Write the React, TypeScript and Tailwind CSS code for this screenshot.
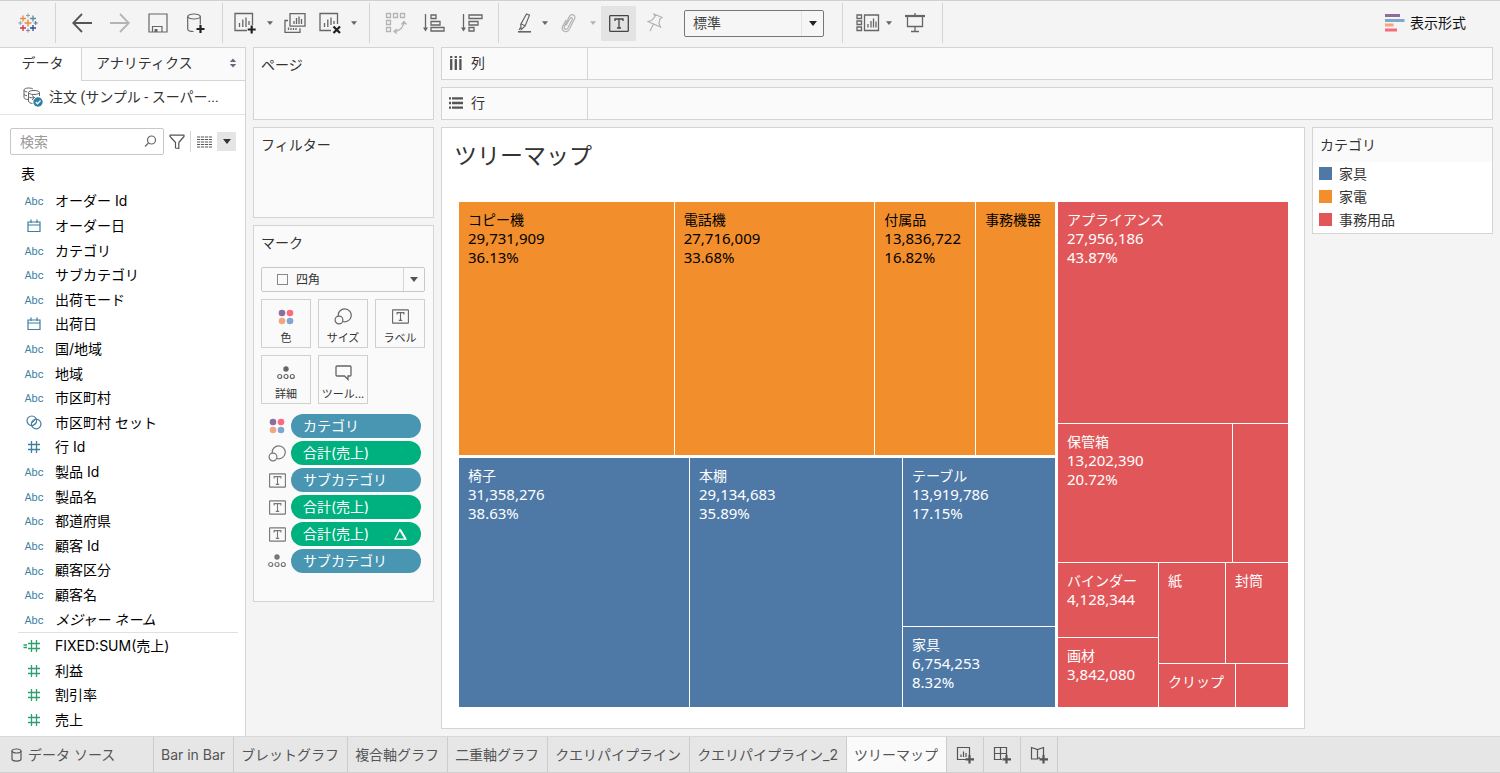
import type { ReactNode } from "react";
import clsx from "clsx";

type TFieldType = "text" | "date" | "set" | "number" | "calc";

type TField = {
  name: string;
  type: TFieldType;
  italic?: boolean;
};

const dimensions: TField[] = [
  { name: "オーダー Id", type: "text" },
  { name: "オーダー日", type: "date" },
  { name: "カテゴリ", type: "text" },
  { name: "サブカテゴリ", type: "text" },
  { name: "出荷モード", type: "text" },
  { name: "出荷日", type: "date" },
  { name: "国/地域", type: "text" },
  { name: "地域", type: "text" },
  { name: "市区町村", type: "text" },
  { name: "市区町村 セット", type: "set" },
  { name: "行 Id", type: "number" },
  { name: "製品 Id", type: "text" },
  { name: "製品名", type: "text" },
  { name: "都道府県", type: "text" },
  { name: "顧客 Id", type: "text" },
  { name: "顧客区分", type: "text" },
  { name: "顧客名", type: "text" },
  { name: "メジャー ネーム", type: "text", italic: true },
];

const measures: TField[] = [
  { name: "FIXED:SUM(売上)", type: "calc" },
  { name: "利益", type: "number" },
  { name: "割引率", type: "number" },
  { name: "売上", type: "number" },
];

const sheets = [
  "Bar in Bar",
  "ブレットグラフ",
  "複合軸グラフ",
  "二重軸グラフ",
  "クエリパイプライン",
  "クエリパイプライン_2",
  "ツリーマップ",
];

const legend = [
  { name: "家具", color: "bg-[#4e79a7]" },
  { name: "家電", color: "bg-[#f28e2b]" },
  { name: "事務用品", color: "bg-[#e15759]" },
];

const App = () => {
  return (
    <div className="flex min-h-screen flex-col border-y border-[#d0d0d0] bg-[#f4f4f4] font-[Inter,'Noto_Sans_CJK_JP',sans-serif] text-sm text-[#333]">
      <Toolbar />
      <main className="flex flex-1">
        <DataPane />
        <div className="flex flex-1 gap-[7px] px-[7px] pb-[7px]">
          <Cards />
          <div className="flex min-w-0 flex-1 flex-col gap-[7px]">
            <Shelf icon={<ColumnsIcon />} label="列" />
            <Shelf icon={<RowsIcon />} label="行" />
            <div className="flex flex-1 items-start gap-[7px]">
              <Worksheet />
              <Legend />
            </div>
          </div>
        </div>
      </main>
      <SheetTabs />
    </div>
  );
};

export default App;

/* ---------- toolbar ---------- */

type TToolButton = {
  label: string;
  children: ReactNode;
  className?: string;
};
const ToolButton = ({ label, children, className }: TToolButton) => (
  <button
    type="button"
    aria-label={label}
    className={clsx("flex h-[35px] shrink-0 items-center justify-center", className)}
  >
    {children}
  </button>
);

const ToolGroup = ({ children, className }: { children: ReactNode; className?: string }) => (
  <div
    className={clsx(
      "flex h-10 shrink-0 items-center border-r border-[#d4d4d4] text-[#666]",
      className
    )}
  >
    {children}
  </div>
);

const Toolbar = () => (
  <header className="flex h-[46px] items-center pb-0.5">
    <ToolGroup className="w-14 justify-center">
      <LogoIcon />
    </ToolGroup>
    <ToolGroup className="px-[7px]">
      <ToolButton label="元に戻す" className="w-[38px]">
        <svg width="20" height="20" viewBox="0 0 20 20" fill="none" stroke="#555" strokeWidth="1.8">
          <path d="M10 1L1.2 10l8.8 9M1.2 10H20" />
        </svg>
      </ToolButton>
      <ToolButton label="やり直し" className="w-[38px]">
        <svg width="20" height="20" viewBox="0 0 20 20" fill="none" stroke="#b4b4b4" strokeWidth="1.8">
          <path d="M10 1l8.8 9-8.8 9M18.8 10H0" />
        </svg>
      </ToolButton>
      <ToolButton label="保存" className="w-[38px]">
        <svg width="20" height="20" viewBox="0 0 20 20" fill="none" stroke="currentColor" strokeWidth="1.2">
          <path d="M1 1h18v18H1zM4.500 19v-5.500h9.500V19" />
          <path d="M6.500 16h3v3h-3z" fill="currentColor" stroke="none" />
        </svg>
      </ToolButton>
      <ToolButton label="新しいデータ ソース" className="w-[38px]">
        <svg width="20" height="22" viewBox="0 0 20 22" fill="none" stroke="currentColor" strokeWidth="1.2">
          <ellipse cx="8" cy="4.500" rx="6.300" ry="2.500" />
          <path d="M1.700 4.500v12.500c0 1.500 2.500 2.500 5.800 2.500M14.300 4.500v8" />
          <path d="M14.500 13v8M10.500 17h8" stroke="#222" strokeWidth="2.200" />
        </svg>
      </ToolButton>
    </ToolGroup>
    <ToolGroup className="pr-2 pl-1">
      <ToolButton label="新しいワークシート" className="w-9">
        <svg width="22" height="22" viewBox="0 0 22 22" fill="none" stroke="currentColor" strokeWidth="1.3">
          <path d="M13 18.500H1V1.500h17.500V13M5.500 15v-4M8.800 15V7.500M12 15V5.500M15 13V9" />
          <path d="M17.700 13.500v8M13.700 17.500h8" stroke="#222" strokeWidth="2.200" />
        </svg>
      </ToolButton>
      <ToolButton label="新しいワークシートのメニュー" className="w-3.5">
        <Caret />
      </ToolButton>
      <ToolButton label="複製" className="w-9">
        <svg width="22" height="20" viewBox="0 0 22 20" fill="none" stroke="currentColor" strokeWidth="1.3">
          <path d="M6 .7h15v12.500H6zM10 11V8M12.500 11V5M15 11V3.500M17.500 11V6" />
          <path d="M4 7.500H1v11.800h15v-4M4.500 17v-2.500M7 17v-2M9.500 17v-2M12 17v-2" />
        </svg>
      </ToolButton>
      <ToolButton label="クリア" className="w-[34px]">
        <svg width="22" height="22" viewBox="0 0 22 22" fill="none" stroke="currentColor" strokeWidth="1.3">
          <path d="M12 18.500H1V1.500h17.500V12M5.500 15v-4M8.800 15V7.500M12 13V5.500M15 12V9" />
          <path d="M14.500 14.500l6.500 6.500M21 14.500L14.500 21" stroke="#222" strokeWidth="2.200" />
        </svg>
      </ToolButton>
      <ToolButton label="クリアのメニュー" className="w-3.5">
        <Caret />
      </ToolButton>
    </ToolGroup>
    <ToolGroup className="px-[7px]">
      <ToolButton label="行と列の交換" className="w-[38px] text-[#b4b4b4]">
        <svg width="22" height="22" viewBox="0 0 22 22" fill="none" stroke="currentColor" strokeWidth="1.3">
          <path d="M1.500 1.500h4v4h-4zM8.500 1.500h4v4h-4zM15.500 1.500h4v4h-4zM1.500 8.500h4v4h-4zM1.500 15.500h4v4h-4z" />
          <path d="M19 9.500c0 5-4 9.500-9.500 10M16.500 12.500L19 9.500l2.500 3M12 17l-3 2.500 3 2" />
        </svg>
      </ToolButton>
      <ToolButton label="昇順で並べ替え" className="w-[38px]">
        <svg width="22" height="20" viewBox="0 0 22 20" fill="none" stroke="currentColor" strokeWidth="1.300">
          <path d="M2.500 1v16M8 2h5v3.500H8zM8 8.500h9V12H8zM8 14.500h13V18H8z" />
          <path d="M0 14.500h5L2.500 18.500z" fill="currentColor" stroke="none" />
        </svg>
      </ToolButton>
      <ToolButton label="降順で並べ替え" className="w-[38px]">
        <svg width="22" height="20" viewBox="0 0 22 20" fill="none" stroke="currentColor" strokeWidth="1.300">
          <path d="M2.500 1v16M8 2h13v3.500H8zM8 8.500h9V12H8zM8 14.500h5V18H8z" />
          <path d="M0 14.500h5L2.500 18.500z" fill="currentColor" stroke="none" />
        </svg>
      </ToolButton>
    </ToolGroup>
    <ToolGroup className="pr-[18px] pl-3">
      <ToolButton label="ハイライト" className="w-7">
        <svg width="16" height="20" viewBox="0 0 16 20" fill="none" stroke="currentColor" strokeWidth="1.200">
          <path d="M9.500 1l3 1.200-4.500 11-3.800 3.300-.5-5zM4.300 11l3.800 1.700M3.500 14.500l-1.500 2.500" />
          <path d="M1 18.800h13" strokeWidth="1.600" />
        </svg>
      </ToolButton>
      <ToolButton label="ハイライトのメニュー" className="w-3">
        <Caret />
      </ToolButton>
      <ToolButton label="グループ" className="w-9 text-[#b4b4b4]">
        <svg width="16" height="20" viewBox="0 0 16 20" fill="none" stroke="currentColor" strokeWidth="1.200">
          <path d="M5 12.500L9 5.500c1-1.600 3-.6 2.200 1.200L6.800 15c-1.400 2.500-4.600 1-3.400-1.700L8.300 3.500c2-3.500 7-1.500 5.300 2.300L8.200 16.500c-2.500 4.300-8.700 1.500-6.500-3.200L5 7" />
        </svg>
      </ToolButton>
      <ToolButton label="グループのメニュー" className="w-3 text-[#b4b4b4]">
        <Caret />
      </ToolButton>
      <ToolButton label="マーク ラベルを表示" className="ml-0.5 w-[35px] bg-[#e3e3e3] text-[#444]">
        <LabelIcon width={20} height={17} />
      </ToolButton>
      <ToolButton label="軸を固定" className="w-[38px] text-[#b4b4b4]">
        <svg width="16" height="20" viewBox="0 0 16 20" fill="none" stroke="currentColor" strokeWidth="1.200">
          <path d="M7 1l8 3.500-2.200 1.700-.8 4.300 1.500 3.500L1 8.500l3.800-1.300L8 3.700zM6.500 11L3 18" />
        </svg>
      </ToolButton>
      <div className="relative ml-[10px] flex h-[27px] w-[140px] items-center rounded-[2px] border border-[#777] bg-[#f6f6f6]">
        <select
          aria-label="表示サイズ"
          className="h-full w-full appearance-none bg-transparent pl-2 text-sm text-[#444] outline-none"
        >
          <option>標準</option>
        </select>
        <span className="pointer-events-none absolute inset-y-0 right-0 flex w-[22px] items-center justify-center border-l border-[#e4e4e4] text-[#222]">
          <Caret large />
        </span>
      </div>
    </ToolGroup>
    <ToolGroup className="pr-2 pl-[9px]">
      <ToolButton label="カードの表示/非表示" className="w-8">
        <svg width="24" height="18" viewBox="0 0 24 18" fill="none" stroke="currentColor" strokeWidth="1.300">
          <path d="M1 1h4.500v3.500H1zM1 7h4.500v3.500H1zM1 13h4.500v3.500H1zM8.500 1h14v15.500h-14zM12 13.500V10M15 13.500V7M17.500 13.500V4.500M20 13.500V7.500" />
        </svg>
      </ToolButton>
      <ToolButton label="カードのメニュー" className="w-2.5">
        <Caret />
      </ToolButton>
      <ToolButton label="プレゼンテーション モード" className="ml-0.5 w-[38px]">
        <svg width="20" height="20" viewBox="0 0 20 20" fill="none" stroke="currentColor" strokeWidth="1.300">
          <path d="M0 3h20" strokeWidth="2.200" />
          <path d="M10 0v3M2.500 3.500v10h15v-10M10 13.500V18M6 18.500h8" />
        </svg>
      </ToolButton>
    </ToolGroup>
    <button type="button" className="mr-[34px] ml-auto flex items-center gap-[5px] text-[#111]">
      <svg width="20" height="18" viewBox="0 0 20 18">
        <path d="M0 0h15v3H0z" fill="#8a6f9c" />
        <path d="M0 5h19.500v3H0z" fill="#7fa8cf" />
        <path d="M0 9.500h8.500v3H0z" fill="#f2a680" />
        <path d="M0 14.500h12v3H0z" fill="#fa6b7a" />
      </svg>
      表示形式
    </button>
  </header>
);

/* ---------- data pane ---------- */

const DataPane = () => (
  <aside className="flex w-[246px] shrink-0 flex-col border-t border-r border-[#d4d4d4] bg-white">
    <div className="flex h-[33px]">
      <button type="button" className="w-[81px] pb-1 pl-1">
        データ
      </button>
      <button
        type="button"
        className="flex flex-1 items-center justify-between border-b border-l border-[#d4d4d4] bg-[#fafafa] pr-2 pb-0.5 pl-[14px]"
      >
        アナリティクス
        <svg width="8" height="10" viewBox="0 0 8 10" fill="#5f6b80">
          <path d="M4 0.500l3.200 3.500H.8zM4 9.500L.8 6h6.400z" />
        </svg>
      </button>
    </div>
    <button
      type="button"
      className="flex h-[34px] items-center gap-1.5 border-b border-[#e4e4e4] pb-0.5 pl-[23px] font-[Roboto,'Noto_Sans_CJK_JP',sans-serif] whitespace-nowrap"
    >
      <DataSourceIcon />
      注文 (サンプル - スーパー...
    </button>
    <div className="mt-[13px] flex h-[27px] items-center pl-[10px]">
      <div className="relative h-full w-[154px]">
        <input
          type="search"
          aria-label="検索"
          placeholder="検索"
          className="h-full w-full rounded-[2px] border border-[#c8c8c8] pr-7 pl-[9px] text-sm outline-none placeholder:text-[#999]"
        />
        <svg className="absolute top-[7px] right-[7px]" width="13" height="13" viewBox="0 0 13 13" fill="none" stroke="#666" strokeWidth="1.200">
          <circle cx="7.500" cy="5" r="4" />
          <path d="M4.500 8L1 11.500" />
        </svg>
      </div>
      <button type="button" aria-label="フィルター" className="ml-[5px]">
        <svg width="16" height="16" viewBox="0 0 16 16" fill="none" stroke="#555" strokeWidth="1.200" strokeLinejoin="round">
          <path d="M1 1.200h14v1.300L9.800 8.500v6L6.500 14V8.500L1 2.500z" />
        </svg>
      </button>
      <span className="ml-[5px] h-[21px] w-px bg-[#d8d8d8]" />
      <button type="button" aria-label="表示方法" className="ml-1.5">
        <svg width="15" height="12" viewBox="0 0 15 12" fill="none" stroke="#555" strokeWidth="1.200">
          <path d="M0 1h15M0 3.500h15M0 6h15M0 8.500h15M0 11h15" strokeDasharray="3.200 .8" />
        </svg>
      </button>
      <button
        type="button"
        aria-label="データ ペインのメニュー"
        className="ml-[5px] flex h-[19px] w-[19px] items-center justify-center bg-[#e5e5e5] text-[#333]"
      >
        <Caret large />
      </button>
    </div>
    <h2 className="mt-[9px] pl-[21px] leading-5 text-black">表</h2>
    <FieldList fields={dimensions} className="mt-[5px] h-[443px] text-[#3d7f9f]" />
    <hr className="mr-[7px] ml-[18px] border-[#e0e0e0]" />
    <FieldList fields={measures} className="mt-px h-[98px] text-[#2f9e70]" />
  </aside>
);

const FieldList = ({ fields, className }: { fields: TField[]; className: string }) => (
  <ul className={clsx("flex flex-col", className)}>
    {fields.map((field) => (
      <li key={field.name} className="flex min-h-0 flex-1">
        <button type="button" className="flex flex-1 items-center gap-[9px] pl-[22px]">
          <span className="flex h-full w-6 items-center justify-center">
            <FieldIcon type={field.type} />
          </span>
          <span className={clsx("leading-5 whitespace-nowrap text-black", field.italic && "italic")}>
            {field.name}
          </span>
        </button>
      </li>
    ))}
  </ul>
);

const FieldIcon = ({ type }: { type: TFieldType }) => {
  if (type === "text") return <span className="pt-0.5 font-[Roboto,sans-serif] text-[11px]">Abc</span>;
  if (type === "date")
    return (
      <svg width="14" height="14" viewBox="0 0 14 14" fill="none" stroke="currentColor" strokeWidth="1.200">
        <path d="M1 3h12v9.500H1zM1 6h12M4 .5V4M10 .5V4" />
      </svg>
    );
  if (type === "set")
    return (
      <svg width="16" height="15" viewBox="0 0 16 15" fill="none" stroke="currentColor" strokeWidth="1.200">
        <circle cx="5.800" cy="5.800" r="4.800" />
        <circle cx="10.200" cy="9" r="4.800" />
        <path d="M6 8l3-3M7.500 10L10 7.500" strokeWidth="1" />
      </svg>
    );
  return (
    <svg width="24" height="14" viewBox="0 0 24 14" fill="none" stroke="currentColor" strokeWidth="1.300">
      <path d="M9.500 1v12M14.500 1v12M6 4.500h12M6 9.500h12" />
      {type === "calc" && <path d="M1.500 6H5M1.500 8.500H5" />}
    </svg>
  );
};

/* ---------- cards ---------- */

const Cards = () => (
  <div className="flex w-[181px] shrink-0 flex-col gap-[7px]">
    <Card title="ページ" className="h-[73px]" />
    <Card title="フィルター" className="h-[91px]" />
    <Card title="マーク" className="pb-7">
      <div className="relative mt-3.5 flex h-[25px] items-center rounded-[2px] border border-[#c8c8c8]">
        <span className="pointer-events-none absolute left-[15px] h-[11px] w-[11px] border border-[#888]" />
        <select
          aria-label="マーク タイプ"
          className="h-full w-full appearance-none bg-transparent pl-[34px] text-xs outline-none"
        >
          <option>四角</option>
        </select>
        <span className="pointer-events-none absolute inset-y-0 right-0 flex w-[21px] items-center justify-center border-l border-[#d4d4d4] text-[#555]">
          <Caret large />
        </span>
      </div>
      <div className="mt-[7px] grid grid-cols-3 gap-[7px]">
        <MarkButton icon={<ColorIcon />} label="色" />
        <MarkButton icon={<SizeIcon />} label="サイズ" />
        <MarkButton icon={<LabelIcon width={17} height={15} />} label="ラベル" />
        <MarkButton icon={<DetailIcon />} label="詳細" />
        <MarkButton icon={<TooltipIcon />} label="ツール..." />
      </div>
      <ul className="mt-[10px] flex flex-col gap-[3px]">
        <Pill icon={<ColorIcon />} label="カテゴリ" />
        <Pill icon={<SizeIcon />} label="合計(売上)" measure />
        <Pill icon={<LabelIcon width={17} height={15} />} label="サブカテゴリ" />
        <Pill icon={<LabelIcon width={17} height={15} />} label="合計(売上)" measure />
        <Pill icon={<LabelIcon width={17} height={15} />} label="合計(売上)" measure delta />
        <Pill icon={<DetailIcon />} label="サブカテゴリ" />
      </ul>
    </Card>
  </div>
);

type TCard = {
  title: string;
  className?: string;
  children?: ReactNode;
};
const Card = ({ title, className, children }: TCard) => (
  <section className={clsx("border border-[#d4d4d4] bg-[#fafafa] pt-[7px] pr-2 pl-[7px]", className)}>
    <h2 className="leading-5">{title}</h2>
    {children}
  </section>
);

const MarkButton = ({ icon, label }: { icon: ReactNode; label: string }) => (
  <button
    type="button"
    className="flex h-[49px] flex-col items-center border border-[#d0d0d0] pt-[7px] text-[11px] leading-4 whitespace-nowrap"
  >
    <span className="flex h-[19px] items-center text-[#666]">{icon}</span>
    <span className="mt-1">{label}</span>
  </button>
);

type TPill = {
  icon: ReactNode;
  label: string;
  measure?: boolean;
  delta?: boolean;
};
const Pill = ({ icon, label, measure, delta }: TPill) => (
  <li className="flex h-6 items-center pr-1 text-[#777]">
    <span className="flex w-[30px] items-center justify-center pl-0.5">{icon}</span>
    <button
      type="button"
      className={clsx(
        "flex h-6 flex-1 items-center justify-between rounded-full pr-3.5 pl-3 text-white",
        measure ? "bg-[#00b180]" : "bg-[#4996b2]"
      )}
    >
      {label}
      {delta && (
        <svg width="13" height="12" viewBox="0 0 13 12" fill="none" stroke="currentColor" strokeWidth="1.200">
          <path d="M6 1.500L12 11.200H1z" />
          <path d="M6.300 2L11.500 11" strokeWidth="2" />
        </svg>
      )}
    </button>
  </li>
);

/* ---------- worksheet ---------- */

const Shelf = ({ icon, label }: { icon: ReactNode; label: string }) => (
  <div className="flex h-[33px] shrink-0 border border-[#d4d4d4] bg-[#fafafa]">
    <div className="flex w-[146px] items-center gap-2 border-r border-[#d4d4d4] pb-0.5 pl-[7px]">
      {icon}
      {label}
    </div>
  </div>
);

const Worksheet = () => (
  <section className="flex min-w-0 flex-1 flex-col self-stretch border border-[#d4d4d4] bg-white pt-[10px] pb-[21px]">
    <h1 className="pl-3 text-[23px] leading-9">ツリーマップ</h1>
    <div className="mt-7 mr-4 ml-[17px] flex flex-1 gap-[3px] font-['Noto_Sans','Noto_Sans_CJK_JP',sans-serif]">
      <div className="flex min-w-0 flex-[596] flex-col gap-[3px]">
        <div className="flex flex-[253] gap-px text-black">
          <Tile name="コピー機" value="29,731,909" share="36.13%" className="flex-[215] bg-[#f28e2b]" />
          <Tile name="電話機" value="27,716,009" share="33.68%" className="flex-[200] bg-[#f28e2b]" />
          <Tile name="付属品" value="13,836,722" share="16.82%" className="flex-[100] bg-[#f28e2b]" />
          <Tile name="事務機器" className="flex-[79] bg-[#f28e2b]" />
        </div>
        <div className="flex flex-[249] gap-px text-white">
          <Tile name="椅子" value="31,358,276" share="38.63%" className="flex-[230] bg-[#4e79a7]" />
          <Tile name="本棚" value="29,134,683" share="35.89%" className="flex-[212] bg-[#4e79a7]" />
          <div className="flex min-w-0 flex-[152] flex-col gap-px">
            <Tile name="テーブル" value="13,919,786" share="17.15%" className="flex-[168] bg-[#4e79a7]" />
            <Tile name="家具" value="6,754,253" share="8.32%" className="flex-[80] bg-[#4e79a7]" />
          </div>
        </div>
      </div>
      <div className="flex min-w-0 flex-[230] flex-col gap-px text-white">
        <Tile name="アプライアンス" value="27,956,186" share="43.87%" className="flex-[221] bg-[#e15759]" />
        <div className="flex flex-[138] gap-px">
          <Tile name="保管箱" value="13,202,390" share="20.72%" className="flex-[174] bg-[#e15759]" />
          <Tile className="flex-[55] bg-[#e15759]" />
        </div>
        <div className="flex min-h-0 flex-[144] gap-px">
          <div className="flex min-w-0 flex-[100] flex-col gap-px">
            <Tile name="バインダー" value="4,128,344" className="flex-[74] bg-[#e15759]" />
            <Tile name="画材" value="3,842,080" className="flex-[69] bg-[#e15759]" />
          </div>
          <div className="flex min-w-0 flex-[129] flex-col gap-px">
            <div className="flex flex-[100] gap-px">
              <Tile name="紙" className="flex-[66] bg-[#e15759]" />
              <Tile name="封筒" className="flex-[62] bg-[#e15759]" />
            </div>
            <div className="flex flex-[43] gap-px">
              <Tile name="クリップ" className="flex-[76] bg-[#e15759]" />
              <Tile className="flex-[52] bg-[#e15759]" />
            </div>
          </div>
        </div>
      </div>
    </div>
  </section>
);

type TTile = {
  name?: string;
  value?: string;
  share?: string;
  className: string;
};
const Tile = ({ name, value, share, className }: TTile) => (
  <div className={clsx("min-h-0 min-w-0 overflow-hidden whitespace-nowrap", className)}>
    {name && (
      <div className="pt-2 pl-[9px] text-[15px] leading-[19px]">
        <p className="text-sm leading-[19px]">{name}</p>
        <p>{value}</p>
        <p>{share}</p>
      </div>
    )}
  </div>
);

const Legend = () => (
  <section className="w-[181px] shrink-0 border border-[#d4d4d4] bg-white pb-0.5">
    <h2 className="bg-[#fafafa] py-[7px] pl-[7px] leading-5">カテゴリ</h2>
    <ul>
      {legend.map((item) => (
        <li key={item.name} className="flex h-[23px] items-center gap-[7px] pl-1.5">
          <span className={clsx("h-[13px] w-[13px]", item.color)} />
          {item.name}
        </li>
      ))}
    </ul>
  </section>
);

/* ---------- bottom tabs ---------- */

const SheetTabs = () => (
  <nav className="flex h-9 shrink-0 border-t border-[#d8d8d8] bg-[#e6e6e6] text-[#555]">
    <button type="button" className="flex w-[154px] items-center gap-1.5 border-r border-[#ccc] pl-[11px]">
      <svg width="11" height="14" viewBox="0 0 11 14" fill="none" stroke="currentColor" strokeWidth="1.200">
        <ellipse cx="5.500" cy="3" rx="4.500" ry="2" />
        <path d="M1 3v8c0 2.700 9 2.700 9 0V3" />
      </svg>
      データ ソース
    </button>
    {sheets.map((sheet) => (
      <button
        key={sheet}
        type="button"
        className={clsx(
          "border-r border-[#ccc] pr-2 pl-[7px] whitespace-nowrap",
          sheet === "ツリーマップ" && "bg-[#fafafa]"
        )}
      >
        {sheet}
      </button>
    ))}
    <NewTab label="新しいワークシート">
      <path d="M10 13.500H1.500V1.500h12V9M5 11V8.500M7.500 11V5.500M10 11V7" />
    </NewTab>
    <NewTab label="新しいダッシュボード">
      <path d="M9 13.500H1.500V1.500h12V9M7.500 1.500v12M1.500 7.500h12" />
    </NewTab>
    <NewTab label="新しいストーリー">
      <path d="M10 11.500L7.500 13 1.500 13V1.500l6 2 6-2V9M7.500 3.500V13" />
    </NewTab>
  </nav>
);

const NewTab = ({ label, children }: { label: string; children: ReactNode }) => (
  <button
    type="button"
    aria-label={label}
    className="flex w-[37px] items-center justify-center border-r border-[#ccc]"
  >
    <svg width="18" height="18" viewBox="0 0 18 18" fill="none" stroke="currentColor" strokeWidth="1.200">
      {children}
      <path d="M13.500 9v8.500M9.500 13.300h8.500" strokeWidth="2.200" />
    </svg>
  </button>
);

/* ---------- icons ---------- */

const Caret = ({ large }: { large?: boolean }) => (
  <svg width={large ? 8 : 6} height={large ? 5 : 4} viewBox="0 0 8 5" fill="currentColor">
    <path d="M0 0h8L4 5z" />
  </svg>
);

const LogoIcon = () => (
  <svg width="20" height="20" viewBox="0 0 20 20" fill="none">
    <path d="M10 6.500v7M6.500 10h7" stroke="#eb8a3c" strokeWidth="1.400" />
    <path d="M5 2.500v6M2 5.500h6" stroke="#eb8a3c" strokeWidth="1.300" />
    <path d="M15 2.500v6M12 5.500h6" stroke="#5c8f9c" strokeWidth="1.300" />
    <path d="M5 12v6M2 15h6" stroke="#d9304c" strokeWidth="1.300" />
    <path d="M15 12v6M12 15h6" stroke="#2e4c8c" strokeWidth="1.300" />
    <path d="M10 .5v4M8 2.500h4" stroke="#7fa6b8" />
    <path d="M10 15.500v4M8 17.500h4" stroke="#8a86ad" />
    <path d="M2.300 8v4M.3 10h4" stroke="#7fa6b8" />
    <path d="M17.700 8v4M15.700 10h4" stroke="#5a6fa8" />
  </svg>
);

const DataSourceIcon = () => (
  <svg width="20" height="20" viewBox="0 0 20 20" fill="none" stroke="#666">
    <path d="M5 12.500C2.500 12.500 1 11.500 1 10.500V3c0-2.500 8-2.500 9-.8M1 3c0 1 1.500 1.800 3 2M1 7c0 1 1.500 1.500 3 1.700" />
    <ellipse cx="11" cy="5.500" rx="5.500" ry="2" />
    <path d="M5.500 5.500V14c0 1.500 2 2.300 4 2.500M16.500 5.500V9M5.500 9.500c1 1.500 4 1.500 6 1M9 8.500l2.500 2L9 13" />
    <circle cx="15" cy="15" r="4.700" fill="#2f80a5" stroke="none" />
    <path d="M12.800 15l1.700 1.700 3-3.200" stroke="#fff" strokeWidth="1.300" />
  </svg>
);

const ColumnsIcon = () => (
  <svg width="14" height="14" viewBox="0 0 14 14" fill="none" stroke="#555" strokeWidth="2.300">
    <path d="M2.200 0v2M2.200 3v11M6.800 0v2M6.800 3v11M11.400 0v2M11.400 3v11" />
  </svg>
);

const RowsIcon = () => (
  <svg width="14" height="14" viewBox="0 0 14 14" fill="none" stroke="#555" strokeWidth="2.300">
    <path d="M0 2.400h2M3 2.400h11M0 7h2M3 7h11M0 11.600h2M3 11.600h11" />
  </svg>
);

const LabelIcon = ({ width, height }: { width: number; height: number }) => (
  <svg width={width} height={height} viewBox="0 0 20 17" fill="none" stroke="currentColor" strokeWidth="1.300">
    <rect x=".7" y=".7" width="18.600" height="15.600" rx=".5" />
    <path d="M6 6V4h8v2M10 4v9M8 13h4" />
  </svg>
);

const ColorIcon = () => (
  <svg width="16" height="16" viewBox="0 0 16 16">
    <circle cx="4" cy="4" r="3.300" fill="#8a6f9c" />
    <circle cx="12" cy="4" r="3.300" fill="#fa6b7f" />
    <circle cx="4" cy="12" r="3.300" fill="#f2a680" />
    <circle cx="12" cy="12" r="3.300" fill="#82a5cf" />
  </svg>
);

const SizeIcon = () => (
  <svg width="18" height="17" viewBox="0 0 18 17" fill="none" stroke="currentColor" strokeWidth="1.200">
    <path d="M4.300 8.200a6.500 6.500 0 1 1 4.500 5.300" />
    <circle cx="5" cy="12" r="3.900" />
  </svg>
);

const DetailIcon = () => (
  <svg width="18" height="14" viewBox="0 0 18 14" fill="none" stroke="currentColor" strokeWidth="1.200">
    <circle cx="9" cy="3" r="2.700" fill="currentColor" stroke="none" />
    <circle cx="2.700" cy="10.500" r="2" />
    <circle cx="9" cy="10.500" r="2" />
    <circle cx="15.300" cy="10.500" r="2" />
  </svg>
);

const TooltipIcon = () => (
  <svg width="17" height="16" viewBox="0 0 17 16" fill="none" stroke="currentColor" strokeWidth="1.300">
    <path d="M2 1h13q1 0 1 1v8q0 1-1 1h-2v3.500L9.500 11H2q-1 0-1-1V2q0-1 1-1z" />
  </svg>
);
